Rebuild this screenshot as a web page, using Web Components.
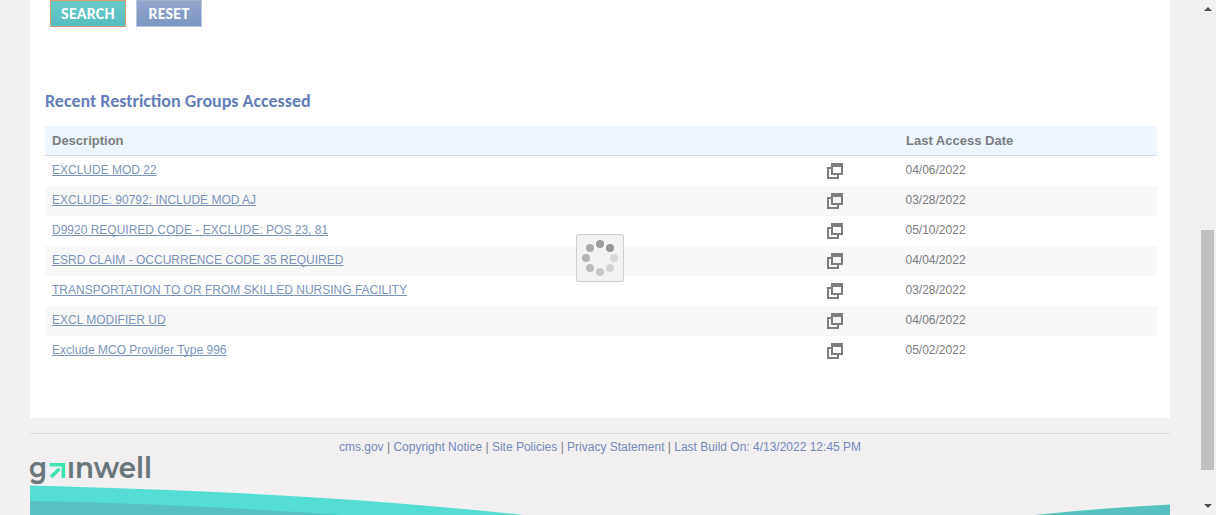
<!DOCTYPE html>
<html lang="en">
<head>
<meta charset="utf-8">
<title>Restriction Groups</title>
<style>
html,body{margin:0;height:100%;overflow:hidden}
body{font:12px/14px "Liberation Sans",Arial,sans-serif;color:#7b7c80;background:#f2f0f1}
</style>
</head>
<body>
<app-shell>
  <main-panel slot="panel">
    <action-button slot="actions" primary>SEARCH</action-button>
    <action-button slot="actions">RESET</action-button>
    <section-title>Recent Restriction Groups Accessed</section-title>
    <group-table>
      <group-row date="04/06/2022">EXCLUDE MOD 22</group-row>
      <group-row date="03/28/2022" alt>EXCLUDE: 90792; INCLUDE MOD AJ</group-row>
      <group-row date="05/10/2022">D9920 REQUIRED CODE - EXCLUDE: POS 23, 81</group-row>
      <group-row date="04/04/2022" alt>ESRD CLAIM - OCCURRENCE CODE 35 REQUIRED</group-row>
      <group-row date="03/28/2022">TRANSPORTATION TO OR FROM SKILLED NURSING FACILITY</group-row>
      <group-row date="04/06/2022" alt>EXCL MODIFIER UD</group-row>
      <group-row date="05/02/2022">Exclude MCO Provider Type 996</group-row>
    </group-table>
  </main-panel>
  <page-footer slot="footer"></page-footer>
  <scroll-rail slot="rail"></scroll-rail>
</app-shell>
<busy-spinner></busy-spinner>
<script>
const define = (name, html, setup) => customElements.define(name, class extends HTMLElement {
  constructor() {
    super();
    this.attachShadow({mode: 'open'}).innerHTML = html;
  }
  connectedCallback() { if (setup) setup(this, this.shadowRoot); }
});

define('app-shell', `<style>
:host{display:grid;grid-template-columns:30px 1140px 1fr 15px;height:515px;overflow:hidden}
.col{grid-column:2;display:flex;flex-direction:column;min-height:0}
.rail{grid-column:4;display:flex}
</style><div class="col"><slot name="panel"></slot><slot name="footer"></slot></div><div class="rail"><slot name="rail"></slot></div>`);

define('main-panel', `<style>
:host{display:block;box-sizing:border-box;height:418px;flex:none;background:#fff;padding:0 13px 0 15px}
.actions{display:flex;gap:10px;padding-left:5px;height:27px;align-items:flex-start;margin-bottom:64px}
</style><div class="actions"><slot name="actions"></slot></div><slot></slot>`);

define('action-button', `<style>
:host{display:block;box-sizing:border-box;width:66px;height:27px;border:1px solid #b9c6de;border-top-color:#a3b2cf;background:linear-gradient(#92a5cc,#7c96c4);color:#fff;font:bold 16px/25px Carlito,Lato,sans-serif;letter-spacing:.25px;text-align:center;white-space:nowrap}
:host([primary]){width:76px;border-color:#d99a6c;background:linear-gradient(#68cbc8,#55bcc0)}
</style><slot></slot>`);

define('section-title', `<style>
:host{display:block;height:35px;font:bold 18px/20px Carlito,Lato,sans-serif;color:#647dba;white-space:nowrap}
</style><slot></slot>`);

define('group-table', `<style>
:host{display:block}
.head{display:grid;grid-template-columns:782px 72px 1fr;box-sizing:border-box;height:30px;border-bottom:1px solid #d5dbe3;background:#edf6fe;color:#7b7c80;font-weight:bold;font-size:13px;line-height:29px;padding-left:7px}
.head span:last-child{grid-column:3}
</style><div class="head"><span>Description</span><span>Last Access Date</span></div><slot></slot>`);

define('group-row', `<style>
:host{display:grid;grid-template-columns:775px 78.5px 1fr;box-sizing:border-box;height:30px;padding-left:7px;background:#fff;line-height:28px;white-space:nowrap}
:host([alt]){background:#f8f8f8}
a{color:#7b93bd;text-decoration:underline;text-underline-offset:1px;text-decoration-thickness:1px;text-decoration-skip-ink:none}
svg{display:block;margin-top:7px}
</style><span><a><slot></slot></a></span>
<svg width="16" height="16" viewBox="0 0 16 16" shape-rendering="crispEdges"><path fill="#7d7d7f" fill-rule="evenodd" d="M4 0H16V12H4ZM6 4V10H14V4ZM0 4H4V6H2V14H10V12H12V16H0Z"/></svg><time></time>`,
(el, root) => { root.querySelector('time').textContent = el.getAttribute('date'); });

define('page-footer', `<style>
:host{display:flex;flex-direction:column;height:97px;padding-top:15px;box-sizing:border-box}
nav{border-top:1px solid #dddcde;height:22px;padding-top:6px;box-sizing:border-box;text-align:center;white-space:nowrap}
a{color:#7489bb}
svg{display:block;flex:none;overflow:visible}
</style>
<nav><a>cms.gov</a> | <a>Copyright Notice</a> | <a>Site Policies</a> | <a>Privacy Statement</a> | <a>Last Build On: 4/13/2022 12:45 PM</a></nav>
<svg width="1140" height="60" viewBox="30 455 1140 60">
<path fill="#55ddd3" d="M30 485.5C180 490 340 495 524 515H30Z"/>
<path fill="#58c0c2" d="M30 501C140 503 240 508 340 515H30Z"/>
<path fill="#55c9bb" d="M1034 515Q1100 508 1170 504.5V515Z"/>
<path fill="#58bfc1" d="M1040 515Q1110 509 1170 506V515Z"/>
<g fill="#69777b" stroke="#69777b" stroke-width=".2" font-family="Montserrat,Lato,sans-serif" font-weight="600" font-size="30">
<text x="29" y="478.2" textLength="18" lengthAdjust="spacingAndGlyphs">g</text>
<text x="67" y="478.2" textLength="85" lengthAdjust="spacingAndGlyphs">ınwell</text></g>
<path fill="none" stroke="#41e3b4" stroke-width="3.6" d="M49.5 464.8H63.4V478M51 477L59.5 468.8"/>
</svg>`);

define('scroll-rail', `<style>
:host{display:flex;flex-direction:column;width:15px;height:515px;background:#f1f1f1}
.thumb{width:13px;height:240px;background:#c1c1c1;margin-top:230px}
.up,.down{height:0;width:0;border:solid transparent;border-width:0 4px 4px;border-bottom-color:#505050;margin:7px 0 0 3px}
.up{margin-bottom:-11px}
.down{border-width:4px 4px 0;border-top-color:#505050;margin-top:34px}
</style><div class="up"></div><div class="thumb"></div><div class="down"></div>`);

define('busy-spinner', `<style>
:host{position:absolute;left:576px;top:234px;width:48px;height:48px;box-sizing:border-box;border:1px solid #cfcfcf;border-radius:2px;background:#f3f3f3}
svg{display:block}
</style><svg width="46" height="46" viewBox="577 235 46 46">
<circle cx="600" cy="244" r="4" fill="#9f9b9b"/><circle cx="610" cy="248" r="4" fill="#989494"/>
<circle cx="614" cy="258" r="4" fill="#d8d8d8"/><circle cx="610" cy="268" r="4" fill="#d2d2d2"/>
<circle cx="600" cy="272" r="4" fill="#c6c6c6"/><circle cx="590" cy="268" r="4" fill="#bdbbbb"/>
<circle cx="586" cy="258" r="4" fill="#b5b3b3"/><circle cx="590" cy="248" r="4" fill="#aba8a8"/></svg>`);
</script>
</body>
</html>
